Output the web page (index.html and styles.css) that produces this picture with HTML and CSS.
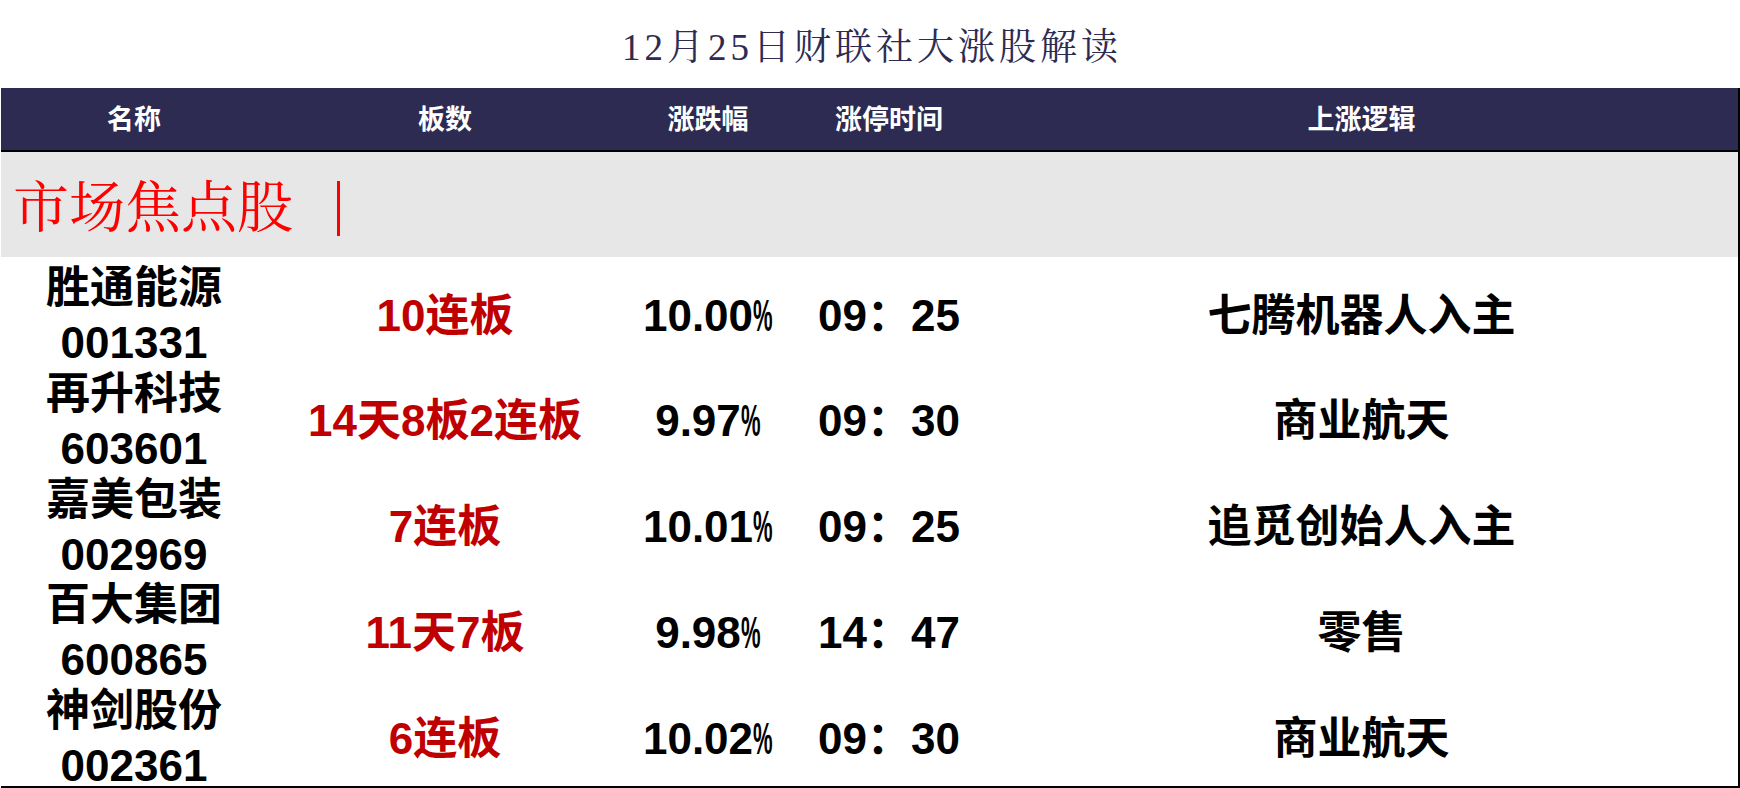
FILE: index.html
```html
<!DOCTYPE html>
<html lang="zh-CN">
<head>
<meta charset="utf-8">
<title>12月25日财联社大涨股解读</title>
<link rel="stylesheet" href="styles.css">
</head>
<body>
<h1 class="title">12月25日财联社大涨股解读</h1>
<div class="board">
  <div class="thead">
    <div class="th">名称</div>
    <div class="th">板数</div>
    <div class="th">涨跌幅</div>
    <div class="th">涨停时间</div>
    <div class="th">上涨逻辑</div>
  </div>
  <div class="section">
    <span class="section-title">市场焦点股</span>
    <span class="section-bar"></span>
  </div>
  <div class="row">
    <div class="cell name"><span>胜通能源</span><span>001331</span></div>
    <div class="cell boards">10连板</div>
    <div class="cell pct">10.00<span class="pct-sign">%</span></div>
    <div class="cell time">09：25</div>
    <div class="cell logic">七腾机器人入主</div>
  </div>
  <div class="row">
    <div class="cell name"><span>再升科技</span><span>603601</span></div>
    <div class="cell boards">14天8板2连板</div>
    <div class="cell pct">9.97<span class="pct-sign">%</span></div>
    <div class="cell time">09：30</div>
    <div class="cell logic">商业航天</div>
  </div>
  <div class="row">
    <div class="cell name"><span>嘉美包装</span><span>002969</span></div>
    <div class="cell boards">7连板</div>
    <div class="cell pct">10.01<span class="pct-sign">%</span></div>
    <div class="cell time">09：25</div>
    <div class="cell logic">追觅创始人入主</div>
  </div>
  <div class="row">
    <div class="cell name"><span>百大集团</span><span>600865</span></div>
    <div class="cell boards">11天7板</div>
    <div class="cell pct">9.98<span class="pct-sign">%</span></div>
    <div class="cell time">14：47</div>
    <div class="cell logic">零售</div>
  </div>
  <div class="row">
    <div class="cell name"><span>神剑股份</span><span>002361</span></div>
    <div class="cell boards">6连板</div>
    <div class="cell pct">10.02<span class="pct-sign">%</span></div>
    <div class="cell time">09：30</div>
    <div class="cell logic">商业航天</div>
  </div>
</div>
</body>
</html>
```

FILE: styles.css
```css
html, body {
  margin: 0;
  padding: 0;
  background: #ffffff;
}

body {
  font-family: "Liberation Sans", "Noto Sans CJK SC", sans-serif;
  overflow: hidden;
}

.title {
  margin: 0;
  height: 88px;
  box-sizing: border-box;
  padding-top: 29px;
  padding-left: 4px;
  text-align: center;
  font-family: "Liberation Serif", "Noto Serif CJK SC", "Noto Sans CJK SC", serif;
  font-weight: normal;
  font-size: 37px;
  line-height: 37px;
  letter-spacing: 4px;
  color: #2d2b52;
}

.board {
  margin-left: 1px;
  border-right: 2px solid #000000;
  border-bottom: 2px solid #000000;
}

.thead,
.row {
  display: grid;
  grid-template-columns: 266px 356px 170px 192px 1fr;
  text-align: center;
}

.thead {
  height: 62px;
  align-items: center;
  background: #2d2b52;
  border-bottom: 2px solid #000000;
  color: #ffffff;
  font-weight: bold;
  font-size: 27px;
  line-height: 1;
}

.th {
  padding-top: 2px;
}

.section {
  height: 105px;
  box-sizing: border-box;
  padding: 6px 0 0 12px;
  display: flex;
  align-items: center;
  background: #e7e7e7;
}

.section-title {
  font-family: "Liberation Serif", "Noto Serif CJK SC", "Noto Sans CJK SC", serif;
  font-size: 56px;
  line-height: 1;
  color: #ff0000;
}

.section-bar {
  width: 3px;
  height: 55px;
  margin-left: 44px;
  margin-top: 2px;
  background: #ff0000;
}

.row {
  height: 105.8px;
  box-sizing: border-box;
  padding-top: 10px;
  align-items: center;
  font-size: 44px;
  font-weight: bold;
  color: #000000;
  line-height: 53px;
}

.name {
  display: flex;
  flex-direction: column;
  align-items: center;
  line-height: 55px;
  margin: -7px 0;
}

.boards {
  color: #c00000;
}

.pct-sign {
  display: inline-block;
  width: 20px;
  transform: scaleX(0.5);
  transform-origin: left center;
  text-align: left;
}
```
